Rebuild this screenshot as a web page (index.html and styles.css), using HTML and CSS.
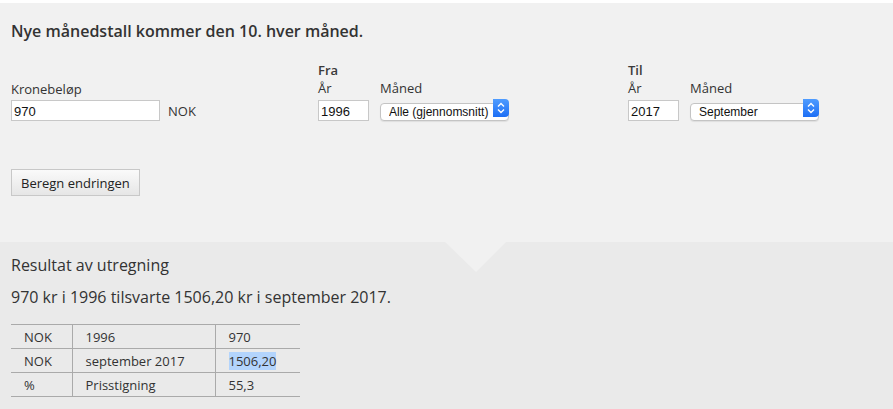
FILE: index.html
```html
<!DOCTYPE html>
<html lang="no">
<head>
    <meta charset="UTF-8">
    <meta name="viewport" content="width=device-width, initial-scale=1.0">
    <title>Priskalkulator</title>
    <link rel="stylesheet" href="styles.css">
</head>
<body>
    <div class="calc">
        <h2 class="calc-title">Nye månedstall kommer den 10. hver måned.</h2>
        <div class="calc-row">
            <div class="amount">
                <label class="lbl" for="belop">Kronebeløp</label>
                <div class="amount-line">
                    <input class="txt txt-wide" id="belop" type="text" value="970">
                    <span class="unit">NOK</span>
                </div>
            </div>
            <div class="period period-from">
                <div class="period-title">Fra</div>
                <div class="period-fields">
                    <div class="fld">
                        <label class="lbl">År</label>
                        <input class="txt txt-year" type="text" value="1996">
                    </div>
                    <div class="fld">
                        <label class="lbl">Måned</label>
                        <div class="sel">
                            <select><option>Alle (gjennomsnitt)</option></select>
                            <span class="sel-btn"><svg width="8" height="12" viewBox="0 0 8 12"><path d="M1 4.5 4 1.5 7 4.5M1 7.5 4 10.5 7 7.5" fill="none" stroke="#fff" stroke-width="1.4"/></svg></span>
                        </div>
                    </div>
                </div>
            </div>
            <div class="period">
                <div class="period-title">Til</div>
                <div class="period-fields">
                    <div class="fld">
                        <label class="lbl">År</label>
                        <input class="txt txt-year" type="text" value="2017">
                    </div>
                    <div class="fld">
                        <label class="lbl">Måned</label>
                        <div class="sel">
                            <select><option>September</option></select>
                            <span class="sel-btn"><svg width="8" height="12" viewBox="0 0 8 12"><path d="M1 4.5 4 1.5 7 4.5M1 7.5 4 10.5 7 7.5" fill="none" stroke="#fff" stroke-width="1.4"/></svg></span>
                        </div>
                    </div>
                </div>
            </div>
        </div>
        <button class="btn" type="button">Beregn endringen</button>
    </div>
    <div class="result">
        <span class="result-arrow"></span>
        <h3 class="result-title">Resultat av utregning</h3>
        <p class="result-text">970 kr i 1996 tilsvarte 1506,20 kr i september 2017.</p>
        <table class="result-table">
            <tr><td>NOK</td><td>1996</td><td>970</td></tr>
            <tr><td>NOK</td><td>september 2017</td><td><span class="hl">1506,20</span></td></tr>
            <tr><td>%</td><td>Prisstigning</td><td>55,3</td></tr>
        </table>
    </div>
</body>
</html>
```
FILE: styles.css
```css
*{
    margin: 0;
    padding: 0;
    box-sizing: border-box;
}
body{
    background: #fff;
    font-family: "Open Sans", "Noto Sans", sans-serif;
    color: #333;
    padding-top: 3px;
}
.calc{
    background: #f1f1f1;
    padding: 17px 11px 46px;
}
.calc-title{
    font-size: 16px;
    line-height: 22px;
    font-weight: 600;
    margin-bottom: 19px;
}
.calc-row{
    display: flex;
    align-items: flex-end;
}
.lbl{
    display: block;
    font-size: 13px;
    line-height: 18px;
    margin-bottom: 2px;
}
.amount{
    flex: none;
    width: 307px;
}
.amount-line{
    display: flex;
    align-items: center;
}
.unit{
    font-size: 13px;
    margin-left: 8px;
}
.txt{
    height: 21px;
    border: 1px solid #c8c8c8;
    background: #fff;
    font-family: "Liberation Sans", Arial, sans-serif;
    font-size: 13px;
    color: #111;
    padding: 2px 2px 0;
}
.txt-wide{
    width: 149px;
}
.txt-year{
    width: 51px;
}
.period{
    flex: none;
}
.period-from{
    width: 310px;
}
.period-title{
    font-size: 13px;
    line-height: 18px;
    font-weight: 600;
    color: #3a3a3a;
}
.period-fields{
    display: flex;
    gap: 11px;
}
.sel{
    position: relative;
    width: 129px;
    height: 18px;
    margin-bottom: 2px;
}
.sel select{
    -webkit-appearance: none;
    appearance: none;
    width: 100%;
    height: 100%;
    border: 1px solid #c4c4c4;
    border-radius: 4px;
    background: #fff;
    font-family: "Liberation Sans", Arial, sans-serif;
    font-size: 12px;
    color: #111;
    padding: 0 0 0 8px;
    box-shadow: 0 1px 1px rgba(0,0,0,.08);
}
.sel-btn{
    position: absolute;
    top: 0;
    right: 0;
    width: 16px;
    height: 18px;
    background: linear-gradient(#4f9cff, #1e6ff5);
    border-radius: 0 4px 4px 0;
    display: flex;
    align-items: center;
    justify-content: center;
}
.btn{
    margin-top: 48px;
    height: 27px;
    padding: 0 9px;
    border: 1px solid #c8c8c8;
    background: linear-gradient(#fafafa, #e6e6e6);
    font-family: "Open Sans", "Noto Sans", sans-serif;
    font-size: 13px;
    color: #222;
}
.result{
    position: relative;
    background: #eaeaea;
    padding: 12px 11px 13px;
}
.result-arrow{
    position: absolute;
    top: 0;
    left: 445px;
    width: 0;
    height: 0;
    border-left: 31px solid transparent;
    border-right: 30px solid transparent;
    border-top: 30px solid #f1f1f1;
}
.result-title{
    font-size: 16px;
    line-height: 22px;
    font-weight: 400;
    margin-bottom: 10px;
}
.result-text{
    font-size: 16px;
    line-height: 22px;
    margin-bottom: 16px;
}
.result-table{
    border-collapse: collapse;
    font-size: 13px;
}
.result-table td{
    height: 24px;
    padding: 0 13px;
    border-top: 1px solid #aaa;
    border-bottom: 1px solid #aaa;
}
.result-table td + td{
    border-left: 1px solid #aaa;
}
.result-table td:nth-child(1){
    width: 61px;
}
.result-table td:nth-child(2){
    width: 143px;
}
.result-table td:nth-child(3){
    width: 85px;
}
.hl{
    background: #b3d4fc;
}
```
